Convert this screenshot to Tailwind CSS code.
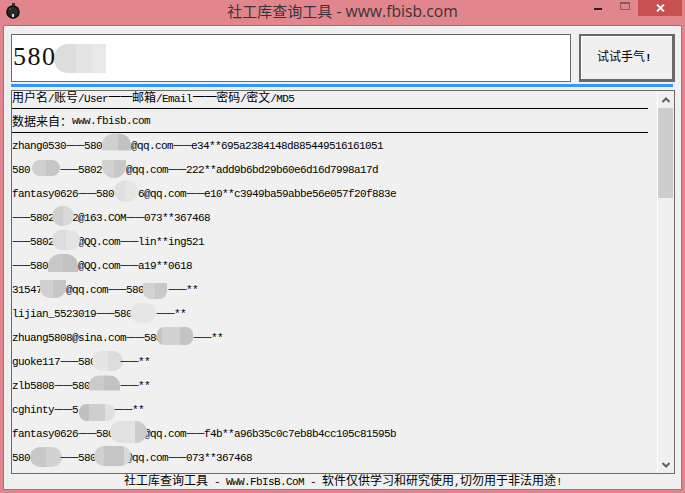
<!DOCTYPE html>
<html>
<head>
<meta charset="utf-8">
<script src="https://cdn.jsdelivr.net/npm/@tailwindcss/browser@4"></script>
</head>
<body class="m-0 overflow-hidden">
<div class="w-[685px] h-[493px] flex flex-col bg-[#e2868d] font-['Liberation_Mono','Noto_Sans_CJK_SC',monospace] text-black overflow-hidden">
  <!-- title bar -->
  <div class="relative h-[25px] shrink-0 flex items-start justify-center">
    <svg class="absolute left-[5px] top-[2px]" width="16" height="17" viewBox="0 0 16 17"><circle cx="8" cy="10" r="6.8" fill="#111"/><circle cx="8" cy="10" r="5" fill="#2a2a2a"/><rect x="7" y="1" width="3" height="3" fill="#333"/><rect x="7" y="12" width="2" height="3" fill="#ddd"/><circle cx="5" cy="7" r="1" fill="#555"/></svg>
    <span class="mt-[1px] text-[15.7px] leading-[20px] text-[#39323c] font-['Open_Sans','Noto_Sans_CJK_SC',sans-serif]"><span class="text-[15px] font-['Noto_Sans_CJK_SC',sans-serif]">社工库查询工具</span> - www.fbisb.com</span>
    <span class="absolute left-[594px] top-[8px] w-[8px] h-[2px] bg-[#2a2226]"></span>
    <span class="absolute left-[620px] top-[2px] w-[10px] h-[8px] border border-[#8a5a60] border-t-2"></span>
    <span class="absolute left-[638px] top-0 w-[44px] h-[16px] bg-[#c75050] flex items-center justify-center">
      <svg width="9" height="8" viewBox="0 0 9 8"><path d="M1 0.5 L8 7.5 M8 0.5 L1 7.5" stroke="#fff" stroke-width="1.8" fill="none"/></svg>
    </span>
  </div>
  <!-- client -->
  <div class="ml-[3px] w-[679px] h-[465px] shrink-0 border border-[#b56a70] bg-[#f0f0f0] pl-[7px] pt-[8px] flex flex-col">
    <div class="flex gap-[8px] h-[48px] shrink-0">
      <div class="w-[560px] border border-[#696969] bg-white flex items-center pl-[1px]">
        <span class="text-[26px] tracking-[1.5px] leading-[30px] font-['Liberation_Serif',serif] text-[#111] translate-y-[-1px]">580</span>
        <span class="ml-[-3px] w-[52px] h-[29px] rounded-bl-[14px] rounded-tl-[14px] bg-[linear-gradient(90deg,#dcdcdc_42%,#e4e4e4_42%,#e4e4e4_74%,#e9e9e9_74%)]"></span>
      </div>
      <div class="w-[96px] border-2 border-r-[3px] border-b-[3px] border-[#696969] bg-[#f0f0f0] shadow-[inset_1px_1px_0_#fff] flex items-center justify-center pr-[5px]">
        <span class="text-[12px] text-black">试试手气<span class="text-[11px] font-bold tracking-[-0.6px]">!</span></span>
      </div>
    </div>
    <div class="mt-[2px] w-[662px] h-[3px] bg-[#3399ff] shrink-0"></div>
    <div class="mt-[3px] w-[664px] h-[384px] shrink-0 border border-[#696969] flex overflow-hidden">
      <div class="w-[645px] shrink-0 text-[11px] tracking-[-0.6px] text-black whitespace-nowrap overflow-hidden">
        <div class="h-[18px] w-[636px] pb-[2px] border-b border-black flex items-center leading-[16px]">
          <span class="text-[12px] tracking-normal">用户名</span><span>/</span><span class="text-[12px] tracking-normal">账号</span><span>/</span><span>User</span><span class="text-[13px] tracking-[-1px] translate-y-[-3px] font-['DejaVu_Sans',sans-serif]">——</span><span class="text-[12px] tracking-normal">邮箱</span><span>/</span><span>Email</span><span class="text-[13px] tracking-[-1px] translate-y-[-3px] font-['DejaVu_Sans',sans-serif]">——</span><span class="text-[12px] tracking-normal">密码</span><span>/</span><span class="text-[12px] tracking-normal">密文</span><span>/</span><span>MD5</span>
        </div>
        <div class="h-[24px] w-[636px] pt-[1px] border-b border-black flex items-center">
          <span class="text-[12px] tracking-normal font-['Noto_Sans_CJK_SC',sans-serif]">数据来自&#xFF1A;</span><span>www.fbisb.com</span>
        </div>
        <div class="[&>div>span:not(.shrink-0)]:pt-[2px]">
        <div class="h-6 flex items-center"><span>zhang0530</span><span class="text-[10px] tracking-[-1px] translate-y-[-2px] font-['DejaVu_Sans',sans-serif]">——</span><span>580</span><span class="shrink-0 w-[29px] h-[17px] translate-y-[-3.5px] rounded-t-[12px] bg-[linear-gradient(90deg,#d0d0d0_55%,#c2c2c2_55%)]"></span><span>@qq.com</span><span class="text-[10px] tracking-[-1px] translate-y-[-2px] font-['DejaVu_Sans',sans-serif]">——</span><span>e34**695a2384148d885449516161051</span></div>
        <div class="h-6 flex items-center"><span>580</span><span class="shrink-0 w-[28px] ml-[2px] h-[16px] translate-y-[-1px] rounded-[8px] bg-[linear-gradient(90deg,#cfcfcf_50%,#c6c6c6_50%)]"></span><span class="text-[10px] tracking-[-1px] translate-y-[-2px] font-['DejaVu_Sans',sans-serif]">——</span><span>5802</span><span class="shrink-0 w-[24px] h-[18px] rounded-b-[12px] bg-[linear-gradient(90deg,#d2d2d2_50%,#c8c8c8_50%)]"></span><span>@qq.com</span><span class="text-[10px] tracking-[-1px] translate-y-[-2px] font-['DejaVu_Sans',sans-serif]">——</span><span>222**add9b6bd29b60e6d16d7998a17d</span></div>
        <div class="h-6 flex items-center"><span>fantasy0626</span><span class="text-[10px] tracking-[-1px] translate-y-[-2px] font-['DejaVu_Sans',sans-serif]">——</span><span>580</span><span class="shrink-0 w-[24px] h-[21px] translate-y-[-2.5px] rounded-[11px] bg-[linear-gradient(90deg,#e0e0e0_50%,#e6e6e6_50%)]"></span><span>6@qq.com</span><span class="text-[10px] tracking-[-1px] translate-y-[-2px] font-['DejaVu_Sans',sans-serif]">——</span><span>e10**c3949ba59abbe56e057f20f883e</span></div>
        <div class="h-6 flex items-center"><span class="text-[10px] tracking-[-1px] translate-y-[-2px] font-['DejaVu_Sans',sans-serif]">——</span><span>5802</span><span class="shrink-0 ml-[-2px] mr-[-2px] w-[22px] h-[20px] translate-y-[-1px] rounded-[10px] bg-[linear-gradient(90deg,#cfcfcf_50%,#d8d8d8_50%)]"></span><span>2@163.COM</span><span class="text-[10px] tracking-[-1px] translate-y-[-2px] font-['DejaVu_Sans',sans-serif]">——</span><span>073**367468</span></div>
        <div class="h-6 flex items-center"><span class="text-[10px] tracking-[-1px] translate-y-[-2px] font-['DejaVu_Sans',sans-serif]">——</span><span>5802</span><span class="shrink-0 ml-[-2px] mr-[-2px] w-[28px] h-[20px] translate-y-[-1px] rounded-[10px] bg-[linear-gradient(90deg,#dcdcdc_50%,#e4e4e4_50%)]"></span><span>@QQ.com</span><span class="text-[10px] tracking-[-1px] translate-y-[-2px] font-['DejaVu_Sans',sans-serif]">——</span><span>lin**ing521</span></div>
        <div class="h-6 flex items-center"><span class="text-[10px] tracking-[-1px] translate-y-[-2px] font-['DejaVu_Sans',sans-serif]">——</span><span>580</span><span class="shrink-0 w-[30px] h-[18px] translate-y-[-2px] rounded-t-[12px] bg-[linear-gradient(90deg,#c8c8c8_50%,#c2c2c2_50%)]"></span><span>@QQ.com</span><span class="text-[10px] tracking-[-1px] translate-y-[-2px] font-['DejaVu_Sans',sans-serif]">——</span><span>a19**0618</span></div>
        <div class="h-6 flex items-center"><span>31547</span><span class="shrink-0 ml-[-2px] w-[26px] h-[18px] rounded-b-[10px] bg-[linear-gradient(90deg,#d0d0d0_50%,#c6c6c6_50%)]"></span><span>@qq.com</span><span class="text-[10px] tracking-[-1px] translate-y-[-2px] font-['DejaVu_Sans',sans-serif]">——</span><span>580</span><span class="shrink-0 ml-[-1px] mr-[1px] w-[24px] h-[16px] translate-y-[2px] rounded-b-[8px] bg-[linear-gradient(90deg,#d2d2d2_50%,#c8c8c8_50%)]"></span><span class="text-[10px] tracking-[-1px] translate-y-[-2px] font-['DejaVu_Sans',sans-serif]">——</span><span>**</span></div>
        <div class="h-6 flex items-center"><span>lijian_5523019</span><span class="text-[10px] tracking-[-1px] translate-y-[-2px] font-['DejaVu_Sans',sans-serif]">——</span><span>580</span><span class="shrink-0 ml-[-2px] w-[26px] h-[20px] rounded-[10px] bg-[#e6e6e6]"></span><span class="text-[10px] tracking-[-1px] translate-y-[-2px] font-['DejaVu_Sans',sans-serif]">——</span><span>**</span></div>
        <div class="h-6 flex items-center"><span>zhuang5808@sina.com</span><span class="text-[10px] tracking-[-1px] translate-y-[-2px] font-['DejaVu_Sans',sans-serif]">——</span><span>580</span><span class="shrink-0 ml-[-5px] w-[36px] h-[18px] translate-y-[-1px] rounded-[7px] bg-[linear-gradient(90deg,#c4c4c4_15%,#d2d2d2_15%,#d2d2d2_65%,#c4c4c4_65%)]"></span><span class="text-[10px] tracking-[-1px] translate-y-[-2px] font-['DejaVu_Sans',sans-serif]">——</span><span>**</span></div>
        <div class="h-6 flex items-center"><span>guoke117</span><span class="text-[10px] tracking-[-1px] translate-y-[-2px] font-['DejaVu_Sans',sans-serif]">——</span><span>580</span><span class="shrink-0 ml-[-4px] mr-[-3px] w-[31px] h-[20px] rounded-[10px] bg-[linear-gradient(90deg,#e4e4e4_50%,#dcdcdc_50%)]"></span><span class="text-[10px] tracking-[-1px] translate-y-[-2px] font-['DejaVu_Sans',sans-serif]">——</span><span>**</span></div>
        <div class="h-6 flex items-center"><span>zlb5808</span><span class="text-[10px] tracking-[-1px] translate-y-[-2px] font-['DejaVu_Sans',sans-serif]">——</span><span>580</span><span class="shrink-0 ml-[-1px] w-[31px] h-[15px] translate-y-[-2.5px] rounded-t-[10px] bg-[linear-gradient(90deg,#cacaca_50%,#c2c2c2_50%)]"></span><span class="text-[10px] tracking-[-1px] translate-y-[-2px] font-['DejaVu_Sans',sans-serif]">——</span><span>**</span></div>
        <div class="h-6 flex items-center"><span>cghinty</span><span class="text-[10px] tracking-[-1px] translate-y-[-2px] font-['DejaVu_Sans',sans-serif]">——</span><span>5</span><span class="shrink-0 ml-[1px] mr-[-1px] w-[36px] h-[17px] translate-y-[3px] rounded-[8px] bg-[linear-gradient(90deg,#c0c0c0_28%,#cecece_28%,#cecece_72%,#e0e0e0_72%)]"></span><span class="text-[10px] tracking-[-1px] translate-y-[-2px] font-['DejaVu_Sans',sans-serif]">——</span><span>**</span></div>
        <div class="h-6 flex items-center"><span>fantasy0626</span><span class="text-[10px] tracking-[-1px] translate-y-[-2px] font-['DejaVu_Sans',sans-serif]">——</span><span>580</span><span class="shrink-0 ml-[-4px] mr-[-3px] w-[37px] h-[22px] translate-y-[-1px] rounded-[11px] bg-[linear-gradient(90deg,#e2e2e2_68%,#cccccc_68%)]"></span><span>@qq.com</span><span class="text-[10px] tracking-[-1px] translate-y-[-2px] font-['DejaVu_Sans',sans-serif]">——</span><span>f4b**a96b35c0c7eb8b4cc105c81595b</span></div>
        <div class="h-6 flex items-center"><span>580</span><span class="shrink-0 mr-[-2px] w-[32px] h-[20px] rounded-[10px] bg-[linear-gradient(90deg,#c8c8c8_50%,#d2d2d2_50%)]"></span><span class="text-[10px] tracking-[-1px] translate-y-[-2px] font-['DejaVu_Sans',sans-serif]">——</span><span>580</span><span class="shrink-0 ml-[-2px] mr-[-5px] w-[37px] h-[20px] translate-y-[-1px] rounded-[10px] bg-[linear-gradient(90deg,#d0d0d0_28%,#c6c6c6_28%,#c6c6c6_80%,#d8d8d8_80%)]"></span><span>@qq.com</span><span class="text-[10px] tracking-[-1px] translate-y-[-2px] font-['DejaVu_Sans',sans-serif]">——</span><span>073**367468</span></div>
        </div>
      </div>
      <!-- scrollbar -->
      <div class="w-[17px] shrink-0 border-l border-white flex flex-col items-stretch">
        <div class="h-[17px] shrink-0 flex items-center justify-center"><svg width="8" height="6" viewBox="0 0 8 6"><path d="M0.5 5 L4 1.5 L7.5 5" stroke="#606060" stroke-width="2" fill="none"/></svg></div>
        <div class="h-[90px] shrink-0 bg-[#cdcdcd] mr-[1px]"></div>
        <div class="flex-1"></div>
        <div class="h-[17px] shrink-0 flex items-center justify-center"><svg width="8" height="6" viewBox="0 0 8 6"><path d="M0.5 1 L4 4.5 L7.5 1" stroke="#606060" stroke-width="2" fill="none"/></svg></div>
      </div>
    </div>
    <div class="flex-1 w-[664px] flex items-center justify-center text-[11px] tracking-[-0.6px] text-black leading-[16px] whitespace-nowrap">
      <span class="text-[12px] tracking-normal">社工库查询工具</span><span class="whitespace-pre"> - WwW.FbIsB.CoM - </span><span class="text-[12px] tracking-normal">软件仅供学习和研究使用</span><span>,</span><span class="text-[12px] tracking-normal">切勿用于非法用途</span><span>!</span>
    </div>
  </div>
</div>
</body>
</html>
